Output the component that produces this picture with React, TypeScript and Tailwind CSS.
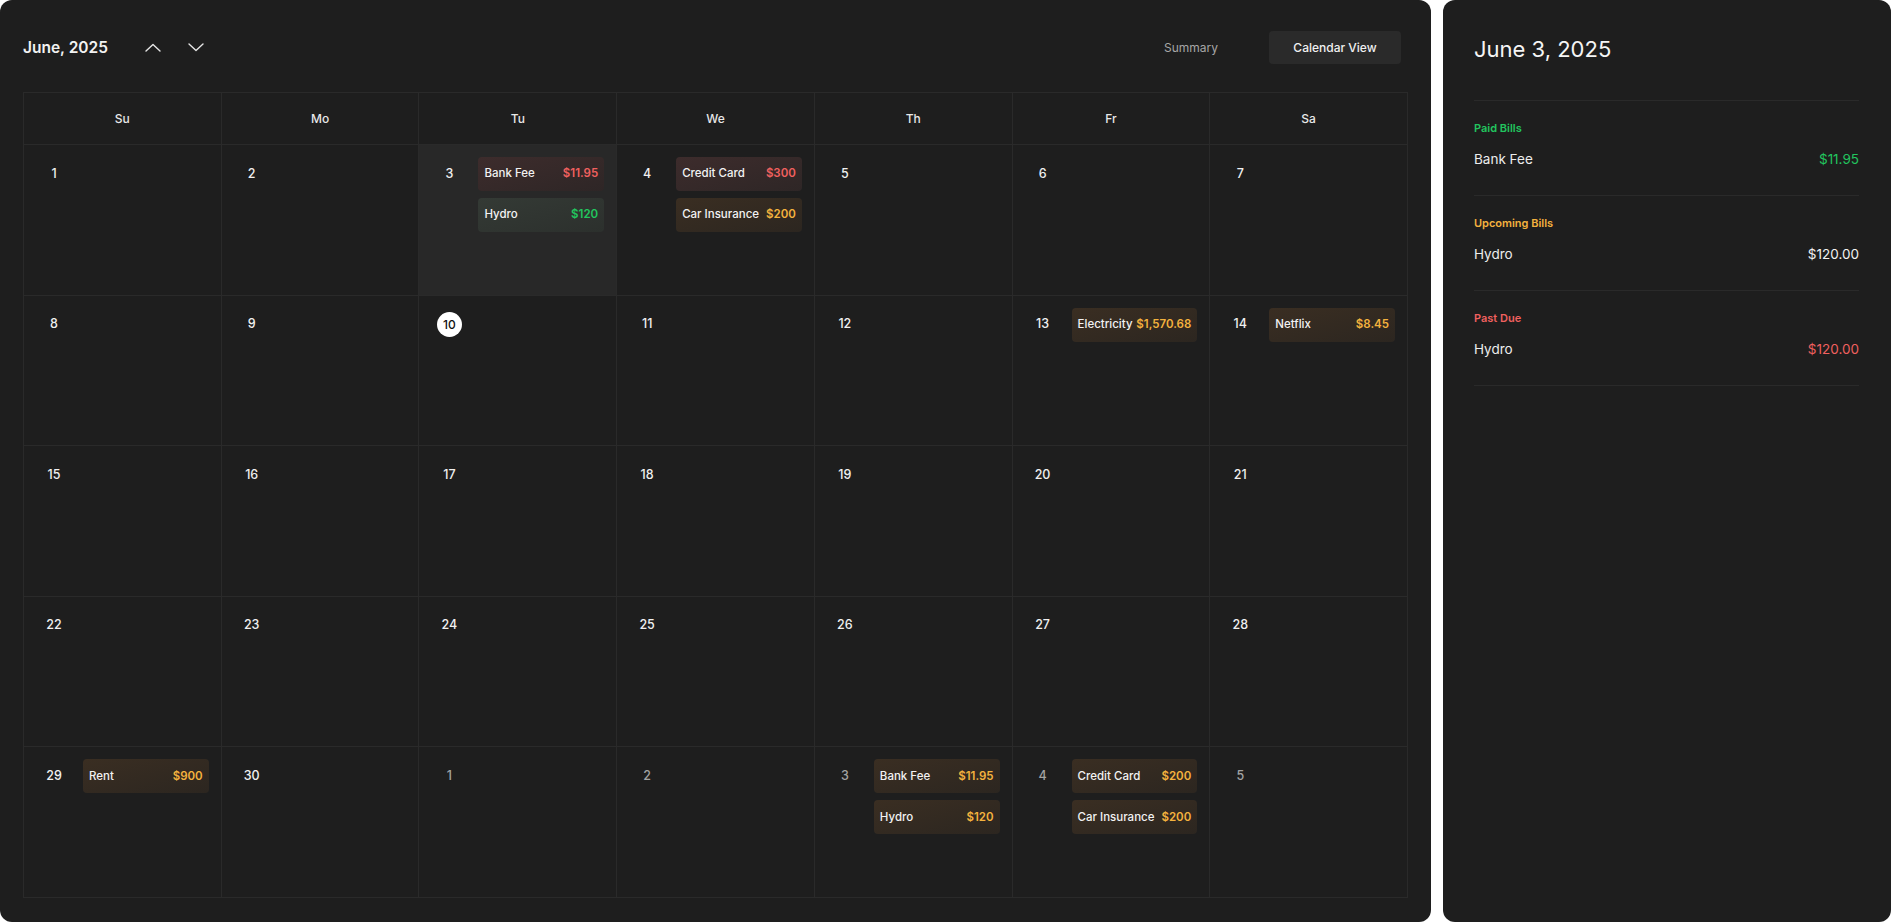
type Tone = 'red' | 'green' | 'amber';

interface Bill {
  name: string;
  amount: string;
  tone: Tone;
}

interface Day {
  n: number;
  muted?: boolean;
  today?: boolean;
  selected?: boolean;
  bills?: Bill[];
}

const chipBg: Record<Tone, string> = {
  red: 'bg-gradient-to-br from-[#3d2c2c] to-[#2e2626]',
  green: 'bg-gradient-to-br from-[#343a35] to-[#2c302d]',
  amber: 'bg-gradient-to-br from-[#3a2e22] to-[#2c2620]',
};

const amountColor: Record<Tone, string> = {
  red: 'text-[#f0605f]',
  green: 'text-[#22c55e]',
  amber: 'text-[#f4b23e]',
};

const weeks: Day[][] = [
  [
    { n: 1 },
    { n: 2 },
    {
      n: 3,
      selected: true,
      bills: [
        { name: 'Bank Fee', amount: '$11.95', tone: 'red' },
        { name: 'Hydro', amount: '$120', tone: 'green' },
      ],
    },
    {
      n: 4,
      bills: [
        { name: 'Credit Card', amount: '$300', tone: 'red' },
        { name: 'Car Insurance', amount: '$200', tone: 'amber' },
      ],
    },
    { n: 5 },
    { n: 6 },
    { n: 7 },
  ],
  [
    { n: 8 },
    { n: 9 },
    { n: 10, today: true },
    { n: 11 },
    { n: 12 },
    { n: 13, bills: [{ name: 'Electricity', amount: '$1,570.68', tone: 'amber' }] },
    { n: 14, bills: [{ name: 'Netflix', amount: '$8.45', tone: 'amber' }] },
  ],
  [15, 16, 17, 18, 19, 20, 21].map((n) => ({ n })),
  [22, 23, 24, 25, 26, 27, 28].map((n) => ({ n })),
  [
    { n: 29, bills: [{ name: 'Rent', amount: '$900', tone: 'amber' }] },
    { n: 30 },
    { n: 1, muted: true },
    { n: 2, muted: true },
    {
      n: 3,
      muted: true,
      bills: [
        { name: 'Bank Fee', amount: '$11.95', tone: 'amber' },
        { name: 'Hydro', amount: '$120', tone: 'amber' },
      ],
    },
    {
      n: 4,
      muted: true,
      bills: [
        { name: 'Credit Card', amount: '$200', tone: 'amber' },
        { name: 'Car Insurance', amount: '$200', tone: 'amber' },
      ],
    },
    { n: 5, muted: true },
  ],
];

const dayNames = ['Su', 'Mo', 'Tu', 'We', 'Th', 'Fr', 'Sa'];

const sections = [
  { title: 'Paid Bills', titleColor: 'text-[#22c55e]', name: 'Bank Fee', amount: '$11.95', amountColor: 'text-[#22c55e]' },
  { title: 'Upcoming Bills', titleColor: 'text-[#f4b23e]', name: 'Hydro', amount: '$120.00', amountColor: 'text-[#f2f2f2]' },
  { title: 'Past Due', titleColor: 'text-[#f0605f]', name: 'Hydro', amount: '$120.00', amountColor: 'text-[#f0605f]' },
];

// thin chevron, 14x7
function Chevron({ up }: { up?: boolean }) {
  return (
    <svg width="16" height="9" viewBox="0 0 16 9" fill="none" stroke="currentColor" strokeWidth="1.4" strokeLinecap="round" strokeLinejoin="round">
      <polyline points={up ? '1,8 8,1.5 15,8' : '1,1 8,7.5 15,1'} />
    </svg>
  );
}

function DayCell({ day }: { day: Day }) {
  return (
    <div
      className={`flex h-[150.6px] border-r border-b border-[#2a2a2a] pt-3 pr-3 pl-3 ${
        day.selected ? 'bg-[#282828]' : ''
      }`}
    >
      <div className="flex h-[34px] w-9 shrink-0 items-center justify-center">
        {day.today ? (
          <span className="flex h-[25px] w-[25px] items-center justify-center rounded-full bg-white text-[12px] font-medium text-[#111]">
            {day.n}
          </span>
        ) : (
          <span
            className={`text-[12.5px] font-medium ${
              day.muted ? 'text-[#a3a3a3]' : 'text-[#f0f0f0]'
            }`}
          >
            {day.n}
          </span>
        )}
      </div>
      <div className="ml-[11px] flex flex-1 flex-col gap-[7px]">
        {day.bills?.map((b, i) => (
          <div
            key={i}
            className={`flex h-[34px] items-center justify-between rounded-[4px] px-[6px] ${chipBg[b.tone]}`}
          >
            <span className="text-[11.5px] font-medium text-[#f2f2f2]">{b.name}</span>
            <span className={`text-[11.5px] font-semibold ${amountColor[b.tone]}`}>{b.amount}</span>
          </div>
        ))}
      </div>
    </div>
  );
}

export default function App() {
  return (
    <div
      className="flex h-[922px] w-full gap-3 bg-white"
      style={{ fontFamily: 'Inter, "Noto Sans", sans-serif' }}
    >
      {/* Calendar */}
      <div className="flex flex-1 flex-col rounded-xl bg-[#1e1e1e] px-[23px] pt-[31px]">
        <div className="flex h-[33px] items-center">
          <h1 className="text-[15.5px] font-semibold text-[#f2f2f2]">June, 2025</h1>
          <button className="ml-[37px] text-[#e5e5e5]">
            <Chevron up />
          </button>
          <button className="ml-[27px] text-[#e5e5e5]">
            <Chevron />
          </button>
          <div className="ml-auto flex items-center gap-[51px] pr-[7px]">
            <button className="text-[12px] text-[#a6a6a6]">Summary</button>
            <button className="h-[33px] w-[132px] rounded-[4px] bg-[#2a2a2a] text-[12px] font-medium text-[#f0f0f0]">
              Calendar View
            </button>
          </div>
        </div>

        <div className="mt-[28px] grid grid-cols-7 border-t border-l border-[#2a2a2a]">
          {dayNames.map((d) => (
            <div
              key={d}
              className="flex h-[52px] items-center justify-center border-r border-b border-[#2a2a2a] text-[12px] font-medium text-[#e8e8e8]"
            >
              {d}
            </div>
          ))}
          {weeks.flat().map((day, i) => (
            <DayCell key={i} day={day} />
          ))}
        </div>
      </div>

      {/* Day detail */}
      <div className="flex w-[448px] shrink-0 flex-col rounded-xl bg-[#1e1e1e] pr-8 pl-[31px]">
        <h2 className="flex h-[100px] items-center pb-[2px] text-[22px] text-[#f5f5f5]">
          June 3, 2025
        </h2>
        {sections.map((s) => (
          <div key={s.title} className="h-[95px] border-t border-[#2a2a2a] pt-[19px]">
            <div className={`text-[11px] font-semibold ${s.titleColor}`}>{s.title}</div>
            <div className="mt-[12px] flex items-center justify-between text-[13.5px]">
              <span className="text-[#ededed]">{s.name}</span>
              <span className={s.amountColor}>{s.amount}</span>
            </div>
          </div>
        ))}
        <div className="border-t border-[#2a2a2a]" />
      </div>
    </div>
  );
}
